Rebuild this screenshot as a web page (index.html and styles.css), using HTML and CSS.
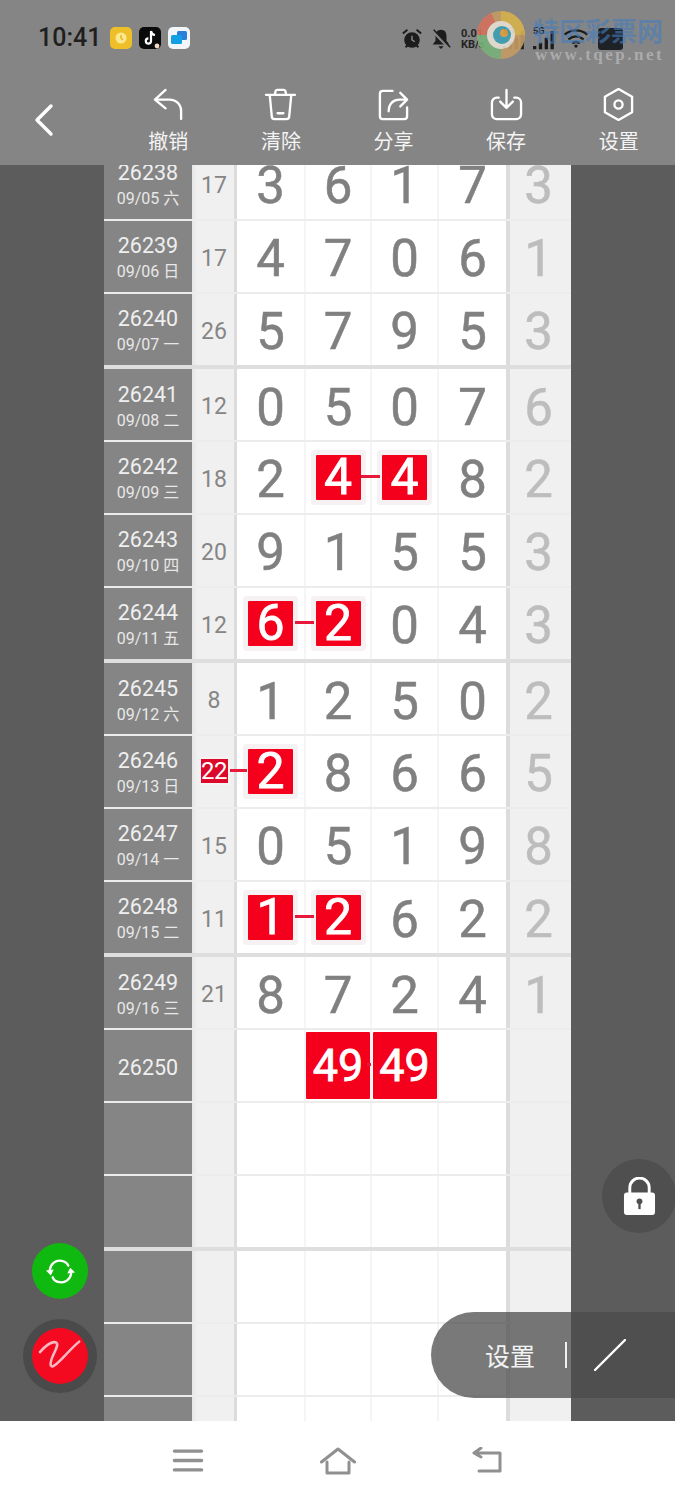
FILE: index.html
```html
<!DOCTYPE html>
<html lang="zh">
<head>
<meta charset="utf-8">
<title>走势图</title>
<link rel="stylesheet" href="styles.css">
</head>
<body>
<div class="app">
  <header class="top">
    <div class="status">
      <span class="time">10:41</span>
      <span class="apps">
        <svg class="app-ic" viewBox="0 0 22 22"><rect width="22" height="22" rx="5" fill="#eebf28"/><circle cx="11" cy="11" r="5.5" fill="#fbe98f"/><path d="M11 8v3l2 2" stroke="#e6b020" stroke-width="1.4" fill="none"/></svg>
        <svg class="app-ic" viewBox="0 0 22 22"><rect width="22" height="22" rx="5" fill="#0a0a0a"/><path d="M12 4v10a2.6 2.6 0 1 1-2.6-2.6M12 4c.3 2.400 1.800 3.800 4 4" stroke="#fff" stroke-width="2.2" fill="none"/><circle cx="18" cy="19" r="2.4" fill="#f4d9c4"/></svg>
        <svg class="app-ic" viewBox="0 0 22 22"><rect width="22" height="22" rx="5" fill="#f2f6f8"/><rect x="9" y="4" width="10" height="9" rx="1.5" fill="#2a7fd8"/><rect x="3" y="8" width="11" height="9" rx="1.5" fill="#12a0e4"/></svg>
      </span>
      <span class="sys">
        <svg class="sys-ic" viewBox="0 0 24 24"><circle cx="12" cy="13" r="8.500" fill="#1c1c1c"/><path d="M12 8.500V13l3 2" stroke="#8a8a8a" stroke-width="1.6" fill="none"/><path d="M2 6l5-4M22 6l-5-4M5 21l2-2M19 21l-2-2" stroke="#1c1c1c" stroke-width="2.2"/></svg>
        <svg class="sys-ic" viewBox="0 0 24 24"><path d="M12 2c4 0 6 3 6 7v5l3 4H3l3-4V9c0-4 2-7 6-7zM9 20h6l-3 3z" fill="#1c1c1c"/><path d="M3 3l18 19" stroke="#858585" stroke-width="3.4"/><path d="M4 2l18 19" stroke="#1c1c1c" stroke-width="1.6"/></svg>
        <span class="speed"><span>0.01</span><span>KB/s</span></span>
        <svg class="signal signal-a" viewBox="0 0 30 30"><text class="sig-t" x="0" y="10">5G</text><path d="M2 28v-4M9 28v-8M16 28V14M23 28V6" stroke="#1c1c1c" stroke-width="4"/></svg>
        <svg class="signal signal-b" viewBox="0 0 30 30"><text class="sig-t" x="0" y="10">5G</text><path d="M2 28v-4M9 28v-8M16 28V14M23 28V6" stroke="#1c1c1c" stroke-width="4"/></svg>
        <svg class="wifi" viewBox="0 0 26 20"><path d="M1 6c7-6 17-6 24 0M5 11c5-4 11-4 16 0M9 15c3-2 5-2 8 0" stroke="#1c1c1c" stroke-width="2.4" fill="none"/><circle cx="13" cy="18" r="1.800" fill="#1c1c1c"/></svg>
        <span class="battery"></span>
      </span>
      <div class="mark">
        <svg class="mark-logo" viewBox="0 0 48 48"><circle cx="24" cy="24" r="24" fill="#c59b64"/><path d="M24 0a24 24 0 0 1 24 24H24z" fill="#d8b24c"/><path d="M0 24a24 24 0 0 0 24 24V24z" fill="#77b27a"/><path d="M0 24A24 24 0 0 1 14 2l10 22z" fill="#d4705c"/><circle cx="24" cy="24" r="14" fill="#e8e2d4"/><circle cx="25" cy="24" r="9" fill="#3d9fb5"/><circle cx="27" cy="22" r="4" fill="#e0a040"/></svg>
        <div class="mark-text">
          <span class="mark-cn">特区彩票网</span>
          <span class="mark-en">www.tqep.net</span>
        </div>
      </div>
    </div>
    <nav class="tools">
      <svg class="back" viewBox="0 0 24 34"><path d="M19 3L5 17l14 14" fill="none" stroke="#fff" stroke-width="3.4" stroke-linecap="round" stroke-linejoin="round"/></svg>
      <div class="tool">
        <svg class="tool-ic" viewBox="0 0 34 34"><path d="M14 2L3 12l11 9M3 12h15c7 0 12 5 12 12v8" fill="none" stroke="#fff" stroke-width="2.4" stroke-linecap="round" stroke-linejoin="round"/></svg>
        <span>撤销</span>
      </div>
      <div class="tool">
        <svg class="tool-ic" viewBox="0 0 34 34"><path d="M2 7h30M11 7l1-4a2 2 0 0 1 2-1h6a2 2 0 0 1 2 1l1 4M6 8l2 21a3 3 0 0 0 3 3h12a3 3 0 0 0 3-3l2-21M14 26h6" fill="none" stroke="#fff" stroke-width="2.4" stroke-linecap="round" stroke-linejoin="round"/></svg>
        <span>清除</span>
      </div>
      <div class="tool">
        <svg class="tool-ic" viewBox="0 0 34 34"><path d="M16 3H6a3 3 0 0 0-3 3v23a3 3 0 0 0 3 3h22a3 3 0 0 0 3-3V20" fill="none" stroke="#fff" stroke-width="2.4" stroke-linecap="round"/><path d="M12 24c0-8 5-12 11-12h8M24 5l7 7-7 7" fill="none" stroke="#fff" stroke-width="2.4" stroke-linecap="round" stroke-linejoin="round"/></svg>
        <span>分享</span>
      </div>
      <div class="tool">
        <svg class="tool-ic" viewBox="0 0 34 34"><path d="M9 10H7a5 5 0 0 0-5 5v12a5 5 0 0 0 5 5h20a5 5 0 0 0 5-5V15a5 5 0 0 0-5-5h-2" fill="none" stroke="#fff" stroke-width="2.4" stroke-linecap="round"/><path d="M17 2v18M10.500 14l6.500 6.500 6.500-6.500" fill="none" stroke="#fff" stroke-width="2.4" stroke-linecap="round" stroke-linejoin="round"/></svg>
        <span>保存</span>
      </div>
      <div class="tool">
        <svg class="tool-ic" viewBox="0 0 34 34"><path d="M17 1l14 8v16l-14 8-14-8V9z" fill="none" stroke="#fff" stroke-width="2.4" stroke-linejoin="round"/><circle cx="17" cy="17" r="4.200" fill="none" stroke="#fff" stroke-width="2.4"/></svg>
        <span>设置</span>
      </div>
    </nav>
  </header>

  <main class="main">
    <div class="table">
      <div class="rows">
        <div class="row"><div class="issue"><b>26238</b><i>09/05 六</i></div><div class="sum">17</div><div class="d">3</div><div class="d">6</div><div class="d">1</div><div class="d">7</div><div class="last">3</div></div>
        <div class="row"><div class="issue"><b>26239</b><i>09/06 日</i></div><div class="sum">17</div><div class="d">4</div><div class="d">7</div><div class="d">0</div><div class="d">6</div><div class="last">1</div></div>
        <div class="row end"><div class="issue"><b>26240</b><i>09/07 一</i></div><div class="sum">26</div><div class="d">5</div><div class="d">7</div><div class="d">9</div><div class="d">5</div><div class="last">3</div></div>

        <div class="row"><div class="issue"><b>26241</b><i>09/08 二</i></div><div class="sum">12</div><div class="d">0</div><div class="d">5</div><div class="d">0</div><div class="d">7</div><div class="last">6</div></div>
        <div class="row"><div class="issue"><b>26242</b><i>09/09 三</i></div><div class="sum">18</div><div class="d">2</div><div class="d"><span class="hit">4</span><span class="link"></span></div><div class="d"><span class="hit">4</span></div><div class="d">8</div><div class="last">2</div></div>
        <div class="row"><div class="issue"><b>26243</b><i>09/10 四</i></div><div class="sum">20</div><div class="d">9</div><div class="d">1</div><div class="d">5</div><div class="d">5</div><div class="last">3</div></div>
        <div class="row end"><div class="issue"><b>26244</b><i>09/11 五</i></div><div class="sum">12</div><div class="d"><span class="hit">6</span><span class="link"></span></div><div class="d"><span class="hit">2</span></div><div class="d">0</div><div class="d">4</div><div class="last">3</div></div>

        <div class="row"><div class="issue"><b>26245</b><i>09/12 六</i></div><div class="sum">8</div><div class="d">1</div><div class="d">2</div><div class="d">5</div><div class="d">0</div><div class="last">2</div></div>
        <div class="row"><div class="issue"><b>26246</b><i>09/13 日</i></div><div class="sum"><span class="hit-sm">22</span><span class="link link-sm"></span></div><div class="d"><span class="hit">2</span></div><div class="d">8</div><div class="d">6</div><div class="d">6</div><div class="last">5</div></div>
        <div class="row"><div class="issue"><b>26247</b><i>09/14 一</i></div><div class="sum">15</div><div class="d">0</div><div class="d">5</div><div class="d">1</div><div class="d">9</div><div class="last">8</div></div>
        <div class="row end"><div class="issue"><b>26248</b><i>09/15 二</i></div><div class="sum">11</div><div class="d"><span class="hit">1</span><span class="link"></span></div><div class="d"><span class="hit">2</span></div><div class="d">6</div><div class="d">2</div><div class="last">2</div></div>

        <div class="row"><div class="issue"><b>26249</b><i>09/16 三</i></div><div class="sum">21</div><div class="d">8</div><div class="d">7</div><div class="d">2</div><div class="d">4</div><div class="last">1</div></div>
        <div class="row"><div class="issue"><b>26250</b></div><div class="sum"></div><div class="d"></div><div class="d"><span class="hit wide">49</span><span class="link link-tiny"></span></div><div class="d"><span class="hit wide">49</span></div><div class="d"></div><div class="last"></div></div>
        <div class="row"><div class="issue"></div><div class="sum"></div><div class="d"></div><div class="d"></div><div class="d"></div><div class="d"></div><div class="last"></div></div>
        <div class="row end"><div class="issue"></div><div class="sum"></div><div class="d"></div><div class="d"></div><div class="d"></div><div class="d"></div><div class="last"></div></div>

        <div class="row"><div class="issue"></div><div class="sum"></div><div class="d"></div><div class="d"></div><div class="d"></div><div class="d"></div><div class="last"></div></div>
        <div class="row"><div class="issue"></div><div class="sum"></div><div class="d"></div><div class="d"></div><div class="d"></div><div class="d"></div><div class="last"></div></div>
        <div class="row"><div class="issue"></div><div class="sum"></div><div class="d"></div><div class="d"></div><div class="d"></div><div class="d"></div><div class="last"></div></div>
      </div>
    </div>

    <div class="fab fab-green">
      <svg class="fab-ic" viewBox="0 0 32 32"><path d="M5 14C6 8 11 4 17 5c3 .5 6 2 7 5M27 18c-1 6-6 10-12 9-3-.5-6-2-7-5" fill="none" stroke="#fff" stroke-width="2.4" stroke-linecap="round"/><path d="M1 15l8-1-3 6zM31 17l-8 1 3-6z" fill="#fff"/></svg>
    </div>
    <div class="fab-ring">
      <div class="fab fab-red">
        <svg class="pen-ic" viewBox="0 0 48 48"><path d="M2 20C8 13 15 8 19 10c3 2-1 8-4 15-2 5-3 10 0 10 5-1 17-17 28-26" fill="none" stroke="#f8b9c2" stroke-width="2.6" stroke-linecap="round" stroke-linejoin="round"/></svg>
      </div>
    </div>
    <div class="lock">
      <svg class="lock-ic" viewBox="0 0 34 40"><path d="M7 17V11a10 10 0 0 1 20 0v6" fill="none" stroke="#fff" stroke-width="3"/><rect x="1" y="16" width="32" height="23" rx="3" fill="#fff"/><circle cx="17" cy="25" r="3" fill="#4f4f4f"/><rect x="15.800" y="26" width="2.4" height="7" fill="#4f4f4f"/></svg>
    </div>
    <div class="pill">
      <span class="pill-label">设置</span>
      <span class="pill-sep"></span>
      <svg class="pill-ic" viewBox="0 0 32 32"><path d="M1 31L31 1" stroke="#fff" stroke-width="2.4" stroke-linecap="round"/></svg>
    </div>
  </main>

  <footer class="nav">
    <svg class="nav-ic nav-menu" viewBox="0 0 30 22"><path d="M2 2h26M2 11h26M2 20h26" stroke="#909090" stroke-width="3.2" stroke-linecap="round"/></svg>
    <svg class="nav-ic nav-home" viewBox="0 0 36 28"><path d="M1.500 15L18 2l16.500 13M7 15v11h22V15" fill="none" stroke="#909090" stroke-width="3" stroke-linecap="round" stroke-linejoin="round"/></svg>
    <svg class="nav-ic nav-back" viewBox="0 0 32 28"><path d="M2 6h26v18H7M9 1L2 6l7 4" fill="none" stroke="#909090" stroke-width="3" stroke-linecap="round" stroke-linejoin="round"/></svg>
  </footer>
</div>
</body>
</html>
```
FILE: styles.css
```css
* { box-sizing: border-box; }
html, body { margin: 0; padding: 0; }
body { width: 675px; height: 1500px; overflow: hidden; font-family: Roboto, "Noto Sans CJK SC", sans-serif; background: #fff; }
.app { display: flex; flex-direction: column; width: 675px; height: 1500px; }

.top { height: 165px; background: #858585; flex: none; display: flex; flex-direction: column; }
.status { position: relative; height: 78px; display: flex; align-items: flex-start; padding: 24px 0 0 38px; }
.time { font-size: 25px; line-height: 28px; font-weight: 500; color: #1f1f1f; width: 72px; }
.apps { display: flex; gap: 7px; padding-top: 3px; }
.app-ic { width: 22px; height: 22px; display: block; }
.sys { position: absolute; left: 401px; top: 26px; display: flex; align-items: center; gap: 7px; }
.sys-ic { width: 22px; height: 22px; display: block; }
.speed { display: flex; flex-direction: column; font-size: 11px; line-height: 11px; font-weight: 700; color: #222; width: 26px; margin-left: 2px; white-space: nowrap; }
.signal { width: 25px; height: 25px; display: block; }
.signal-a { margin-left: 9px; }
.signal-b { margin-left: -2px; }
.sig-t { font-size: 11px; font-weight: 700; fill: #1c1c1c; }
.wifi { width: 26px; height: 19px; display: block; margin-left: -2px; }
.battery { width: 25px; height: 22px; background: #1e2226; border-radius: 3px; margin-left: 2px; }

.mark { position: absolute; left: 477px; top: 11px; display: flex; align-items: flex-start; gap: 8px; }
.mark-logo { width: 48px; height: 48px; display: block; opacity: .9; }
.mark-text { display: flex; flex-direction: column; padding-top: 3px; }
.mark-cn { font-family: "Noto Sans CJK SC", sans-serif; font-size: 26px; line-height: 32px; font-weight: 700; color: rgba(70, 125, 190, .6); white-space: nowrap; }
.mark-en { font-family: "Liberation Serif", serif; font-size: 17px; line-height: 18px; font-weight: 700; letter-spacing: 2.5px; padding-left: 2px; color: rgba(205, 205, 205, .55); white-space: nowrap; }

.tools { display: flex; align-items: flex-start; height: 87px; padding-left: 112px; position: relative; }
.back { position: absolute; left: 32px; top: 25px; width: 24px; height: 34px; }
.tool { width: 113px; display: flex; flex-direction: column; align-items: center; font-family: "Noto Sans CJK SC", sans-serif; font-size: 20px; line-height: 26px; color: #f4f4f4; }
.tool-ic { width: 33px; height: 33px; display: block; margin: 10px 0 7px; }

.main { position: relative; flex: 1; min-height: 0; background: #5c5c5c; padding-left: 104px; overflow: hidden; }
.table { width: 467px; height: 100%; overflow: hidden; background: #fff; }
.rows { margin-top: -17px; }
.row { display: grid; grid-template-columns: 88px 45px 69px 66px 67px 67px 65px; height: 72.75px; border-bottom: 2px solid #ececec; }
.row.end { height: 75.75px; border-bottom: 4px solid #dedede; }

.issue { background: #858585; display: flex; flex-direction: column; align-items: center; justify-content: center; padding-top: 3px; color: #efefef; }
.issue b { font-weight: 400; font-size: 21.5px; line-height: 26px; }
.issue b:only-child { margin-top: 3px; }
.issue i { font-style: normal; font-size: 16px; line-height: 20px; margin-top: 3px; color: #e8e8e8; white-space: nowrap; }
.sum { position: relative; background: linear-gradient(90deg, #e6e6e6, #f0f0f0 5px); border-right: 3px solid #dcdcdc; display: flex; align-items: center; justify-content: center; font-size: 23px; color: #858585; padding: 4px 0 0 2px; }
.d { position: relative; display: flex; align-items: center; justify-content: center; font-size: 51px; color: #808080; -webkit-text-stroke: .5px #808080; border-right: 2px solid #f5f5f5; padding-top: 5px; }
.d:nth-child(6) { border-right: 0; }
.last { background: #f0f0f0; border-left: 4px solid #dcdcdc; display: flex; align-items: center; justify-content: center; font-size: 51px; color: #bdbdbd; -webkit-text-stroke: .5px #bdbdbd; padding: 5px 4px 0 0; }

.hit { display: flex; align-items: center; justify-content: center; width: 45px; height: 45px; margin-top: -5px; background: #f5001c; color: #fff; -webkit-text-stroke: .8px #fff; font-size: 50px; border-radius: 1px; box-shadow: 0 0 0 5px #f6f1f2; }
.hit.wide { width: 64px; height: 67px; font-size: 45px; box-shadow: none; position: relative; z-index: 1; }
.hit-sm { display: flex; align-items: center; justify-content: center; width: 27px; height: 24px; margin-top: -4px; background: #dc0a2a; color: #fff; font-size: 24px; box-shadow: 0 0 0 2px #f9f2f3; letter-spacing: -.5px; }
.link { position: absolute; left: 100%; top: 50%; width: 19px; height: 3px; margin: -2px 0 0 -9px; background: #e6193a; z-index: 2; }
.link-sm { left: calc(100% - 4px); margin-left: 0; width: 17px; }
.link-tiny { width: 4px; margin-left: -3px; }

.fab { position: absolute; left: 32px; top: 1078px; width: 56px; height: 56px; border-radius: 50%; background: #10b910; display: flex; align-items: center; justify-content: center; }
.fab-ic { width: 31px; height: 31px; display: block; }
.fab-ring { position: absolute; left: 23px; top: 1154px; width: 74px; height: 74px; border-radius: 50%; background: #4a4a4a; display: flex; align-items: center; justify-content: center; }
.fab-red { position: static; background: #f40a20; }
.pen-ic { width: 46px; height: 46px; display: block; margin-left: 2px; }
.lock { position: absolute; left: 602px; top: 994px; width: 74px; height: 74px; border-radius: 50%; background: #4f4f4f; display: flex; align-items: center; justify-content: center; }
.lock-ic { width: 33px; height: 39px; display: block; }
.pill { position: absolute; left: 431px; top: 1147px; width: 244px; height: 86px; border-radius: 43px 0 0 43px; background: rgba(74, 74, 74, .74); display: flex; align-items: center; padding-left: 54px; }
.pill-label { font-family: "Noto Sans CJK SC", sans-serif; font-size: 25px; color: #f2f2f2; width: 80px; }
.pill-sep { width: 2px; height: 26px; background: #f0f0f0; }
.pill-ic { width: 32px; height: 32px; display: block; margin-left: 27px; }

.nav { flex: none; height: 79px; background: #fff; display: flex; align-items: center; justify-content: center; gap: 116px; padding-left: 1px; }
.nav-ic { display: block; }
.nav-menu { width: 32px; height: 23px; }
.nav-home { width: 36px; height: 28px; }
.nav-back { width: 32px; height: 28px; }
```
